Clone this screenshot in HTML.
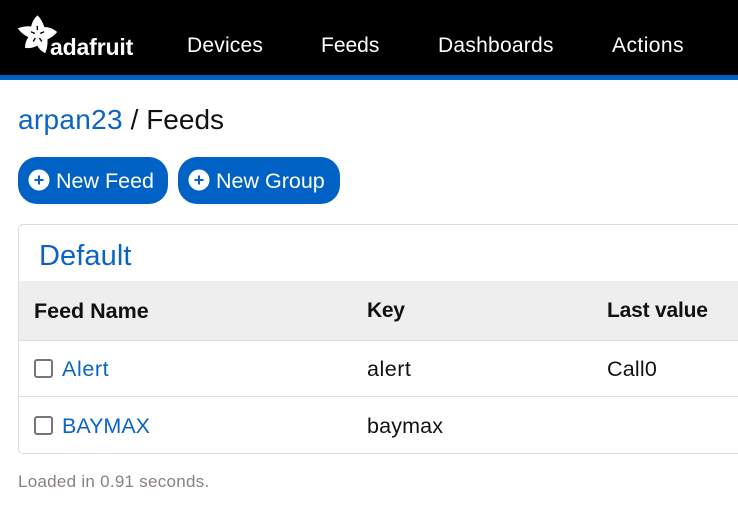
<!DOCTYPE html>
<html><head><meta charset="utf-8"><style>
html,body{margin:0;padding:0;background:#fff}
body{width:738px;height:505px;overflow:hidden;position:relative;font-family:"Liberation Sans",sans-serif;color:#111}
.t{position:absolute;white-space:nowrap;line-height:24px}
.l{color:#0b63c5}
.nav{color:#fff;font-size:21px;top:33.500px;font-weight:400}
.btn{position:absolute;top:157px;height:47px;background:#0062c4;border-radius:19px}
.cb{position:absolute;left:34px;width:15px;height:15px;border:2px solid #767676;border-radius:3px;background:#fff}
.line{position:absolute;left:19px;right:0;height:1px;background:#dedede}
.r{font-size:21.5px}
.h{font-size:21px;font-weight:700;top:299px}
</style></head><body>
<div style="position:absolute;left:0;top:0;width:738px;height:75px;background:#000"></div>
<div style="position:absolute;left:0;top:75px;width:738px;height:5px;background:#0062c4"></div>
<svg style="position:absolute;left:0;top:0" width="70" height="60" viewBox="0 0 70 60">
<path fill="#fff" stroke="#fff" stroke-width="1" stroke-linejoin="round" d="M37.500 16Q41.500 20 44 27.500Q51 27.500 56.500 32Q52.500 37 47 39Q47.500 46 45 52.500Q40 50 37.500 45Q32 48 25.500 47.500Q25.500 42 29 37Q22.500 34 18.500 28.500Q25 26 31.500 27Q33 20 37.500 16Z"/>
<path stroke="#000" stroke-width="1.400" stroke-linecap="round" fill="none" d="M37.200 26.500L37.400 29.500M31.500 32L34.200 33.200M43.500 32L40.800 33.200M33.500 41L35 38.500M41.500 41L39.800 38.500"/>
</svg>
<div class="t" style="left:50px;top:35px;font-size:23px;font-weight:700;color:#fff;letter-spacing:-.15px">adafruit</div>
<div class="t nav" style="left:187px;letter-spacing:.2px">Devices</div>
<div class="t nav" style="left:321px">Feeds</div>
<div class="t nav" style="left:438px;letter-spacing:.25px">Dashboards</div>
<div class="t nav" style="left:612px;letter-spacing:.45px">Actions</div>
<div class="t" style="left:18px;top:108px;font-size:28px"><span class="l" style="letter-spacing:.3px">arpan23</span> / Feeds</div>
<div class="btn" style="left:18px;width:150px"></div>
<div class="btn" style="left:178px;width:162px"></div>
<svg style="position:absolute;left:28px;top:169px" width="22" height="22" viewBox="0 0 22 22"><circle cx="11" cy="11" r="10.500" fill="#fff"/><path d="M11 6.500v9M6.500 11h9" stroke="#0062c4" stroke-width="2"/></svg>
<svg style="position:absolute;left:188px;top:169px" width="22" height="22" viewBox="0 0 22 22"><circle cx="11" cy="11" r="10.500" fill="#fff"/><path d="M11 6.500v9M6.500 11h9" stroke="#0062c4" stroke-width="2"/></svg>
<div class="t" style="left:56px;top:169px;font-size:21.500px;color:#fff">New Feed</div>
<div class="t" style="left:216px;top:169px;font-size:21.500px;color:#fff">New Group</div>
<div style="position:absolute;left:18px;top:224px;width:740px;height:228px;border:1px solid #dedede;border-radius:5px"></div>
<div class="t l" style="left:39px;top:244px;font-size:29px;letter-spacing:.1px">Default</div>
<div style="position:absolute;left:19px;top:281px;width:719px;height:59px;background:#eee"></div>
<div class="line" style="top:340px"></div>
<div class="line" style="top:396px"></div>
<div class="t h" style="left:34px;font-size:21.500px">Feed Name</div>
<div class="t h" style="left:367px;letter-spacing:-.3px">Key</div>
<div class="t h" style="left:607px;letter-spacing:-.2px">Last value</div>
<div class="cb" style="top:359px"></div>
<div class="cb" style="top:416px"></div>
<div class="t l r" style="left:62px;top:357px;letter-spacing:.6px">Alert</div>
<div class="t l r" style="left:62px;top:414px">BAYMAX</div>
<div class="t r" style="left:367px;top:357px;letter-spacing:.5px">alert</div>
<div class="t r" style="left:367px;top:414px;letter-spacing:.15px">baymax</div>
<div class="t r" style="left:607px;top:357px;letter-spacing:.2px">Call0</div>
<div class="t" style="left:18px;top:470px;font-size:17px;color:#8a8080;letter-spacing:.27px">Loaded in 0.91 seconds.</div>
</body></html>
